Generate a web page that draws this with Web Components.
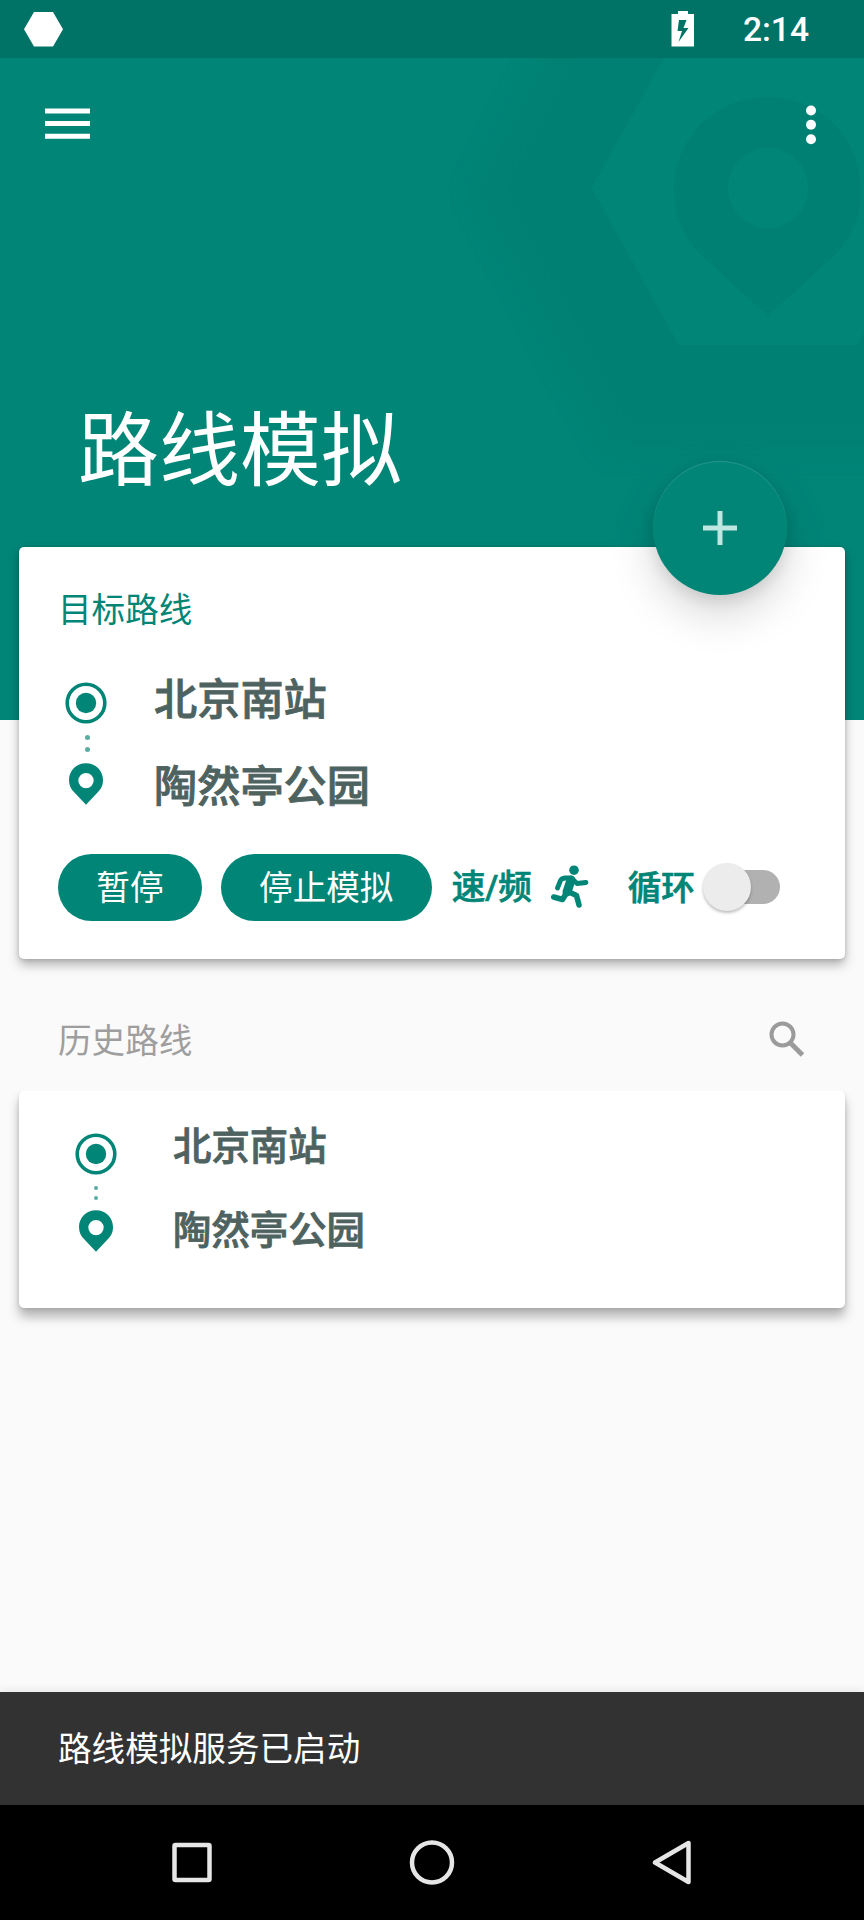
<!DOCTYPE html>
<html lang="zh-CN">
<head>
<meta charset="utf-8">
<title>路线模拟</title>
<style>
html,body{margin:0;padding:0}
body{width:864px;height:1920px;overflow:hidden;background:#fafafa;font-family:"Noto Sans CJK SC",Roboto,sans-serif}
</style>
</head>
<body>
<route-app></route-app>
<script>
const define = (name, html) => {
  const t = document.createElement('template');
  t.innerHTML = html;
  customElements.define(name, class extends HTMLElement {
    constructor() {
      super();
      this.attachShadow({ mode: 'open' }).append(t.content.cloneNode(true));
    }
  });
};

define('status-bar', `
<style>
:host{display:flex;align-items:center;height:58px;box-sizing:border-box;padding:0 55px 0 24px;background:#007266;color:#fff}
svg{display:block}
.space{flex:1}
.time{font:500 33.600px/58px Roboto,sans-serif;margin-left:48px;padding-top:1px}
</style>
<svg width="39" height="35" viewBox="0 0 39 35" style="margin-top:1px"><path d="M10 0H29L39 17.3 29 34.6H10L0 17.3Z" fill="#fff"/></svg>
<div class="space"></div>
<svg width="24" height="36" viewBox="0 0 24 36"><path fill="#fff" fill-rule="evenodd" d="M7 0H17V3H23V35.500H.5V3H7ZM8 9 6.500 20H11L7.500 31 17.500 17H12.500L15.500 9Z"/></svg>
<div class="time">2:14</div>
`);

define('top-bar', `
<style>
:host{display:flex;justify-content:space-between;align-items:center;height:134px;box-sizing:border-box;padding:0 47px 0 45px}
svg{display:block}
.menu{margin-top:-3px}
</style>
<svg class="menu" width="45" height="31" viewBox="0 0 45 31"><path fill="#fff" d="M0 .5H45V5.500H0ZM0 13H45V18H0ZM0 25.700H45V30.700H0Z"/></svg>
<svg width="12" height="40" viewBox="0 0 12 40"><g fill="#fff"><circle cx="6" cy="5.500" r="5"/><circle cx="6" cy="19.800" r="5"/><circle cx="6" cy="34.200" r="5"/></g></svg>
`);

define('hero-header', `
<style>
:host{display:block;position:relative;height:720px;background:#008577;color:#fff;overflow:hidden}
.mark{position:absolute;left:0;top:0}
.body{position:relative}
h1{margin:0;font-weight:400;font-size:81px;line-height:100px;padding:202px 0 0 78px}
</style>
<svg class="mark" width="864" height="720" viewBox="0 0 864 720">
<defs>
<filter id="soft" x="-20%" y="-20%" width="140%" height="140%"><feGaussianBlur stdDeviation="11"/></filter>
<mask id="hole"><rect width="864" height="720" fill="#fff"/><path d="M592 188 679 345H857L944 188 857 31H679Z" fill="#000"/></mask>
</defs>
<g mask="url(#hole)"><path d="M472 190 610 -72H926L1068 190 926 450H610Z" fill="#008072" filter="url(#soft)"/></g>
<path fill="#008072" fill-rule="evenodd" d="M768 97C717 97 674 137 674 190C674 223 688 243 704 258L768 316 832 258C848 243 861 223 861 190C861 137 819 97 768 97ZM768 148A40 40 0 1 1 768 228A40 40 0 1 1 768 148Z"/>
</svg>
<div class="body"><status-bar></status-bar><top-bar></top-bar><h1><slot></slot></h1></div>
`);

define('add-button', `
<style>
:host{display:flex;align-items:center;justify-content:center;width:134px;height:134px;border-radius:50%;background:#008577;box-shadow:0 18px 44px rgba(0,0,0,.17),0 6px 14px rgba(0,0,0,.09),inset 0 1px 1px rgba(255,255,255,.15)}
</style>
<svg width="34" height="34" viewBox="0 0 34 34"><path d="M0 17H34M17 0V34" stroke="#bfe7e2" stroke-width="5"/></svg>
`);

define('paper-card', `
<style>
:host{display:block;position:relative;box-sizing:border-box;background:#fff;border-radius:5px;box-shadow:0 6px 11px rgba(0,0,0,.28),0 1px 4px rgba(0,0,0,.14)}
</style>
<slot></slot>
`);

define('origin-icon', `
<style>:host{display:block}svg{display:block}</style>
<svg width="42" height="42" viewBox="0 0 42 42"><circle cx="21" cy="21" r="18.800" fill="none" stroke="#008577" stroke-width="3.600"/><circle cx="21" cy="21" r="10.200" fill="#008577"/></svg>
`);
define('pin-icon', `
<style>:host{display:block}svg{display:block}</style>
<svg width="34" height="42" viewBox="0 0 34 42"><path fill="#008577" fill-rule="evenodd" d="M17 .2C7.500 .2 0 7.500 0 17C0 22.500 2 26 5 29L17 41.700 29 29C32 26 34 22.500 34 17C34 7.500 26.500 .2 17 .2ZM17 9.900A7.700 7.700 0 1 1 17 25.300A7.700 7.700 0 1 1 17 9.900Z"/></svg>
`);

define('route-stops', `
<style>
:host{display:flex;color:#4e625f;font-weight:500;-webkit-text-stroke:.8px #4e625f}
.rail{display:flex;flex-direction:column;align-items:center;width:42px}
.dots{display:flex;flex-direction:column;align-items:center;gap:var(--dot-gap,7px);padding:var(--dot-pad,11px) 0;margin-left:var(--dot-shift,2px)}
.dots i{width:var(--dot,5px);height:var(--dot,5px);border-radius:50%;background:#5aada3}
.names{display:flex;flex-direction:column;margin-left:var(--name-left,47px);margin-top:var(--name-top);font-size:var(--name-size,43.2px);line-height:60px;gap:var(--name-gap,27px)}
</style>
<div class="rail"><origin-icon></origin-icon><div class="dots"><i></i><i></i></div><pin-icon></pin-icon></div>
<div class="names"><slot name="from"></slot><slot name="to"></slot></div>
`);

define('pill-button', `
<style>
:host{display:flex;align-items:center;justify-content:center;box-sizing:border-box;height:67px;padding:0 38.300px;border-radius:34px;background:#008577;color:#fff;font-size:33.600px;line-height:60px;white-space:nowrap}
span{margin-top:-2px}
</style>
<span><slot></slot></span>
`);

define('toggle-switch', `
<style>
:host{display:flex;align-items:center;width:77px;height:48px}
.track{width:60px;height:34px;margin-left:17px;border-radius:17px;background:#b1b1b1;display:flex;align-items:center}
.thumb{flex:none;width:48px;height:48px;margin-left:-17px;border-radius:50%;background:#ececec;box-shadow:0 2px 3px rgba(0,0,0,.26)}
</style>
<div class="track"><div class="thumb"></div></div>
`);

define('run-icon', `
<style>:host{display:block}svg{display:block}</style>
<svg width="38" height="44" viewBox="0 0 38 44"><g fill="none" stroke="#008577" stroke-linecap="round" stroke-linejoin="round"><circle cx="23" cy="5.200" r="4.800" fill="#008577" stroke="none"/><path d="M6.500 23 9.500 15.500Q10.500 13.500 14 13L20 12.800 26 18.500 35 17.500" stroke-width="4.800"/><path d="M20 15 16 27" stroke-width="9"/><path d="M16 27 11.500 34.500 2.700 32" stroke-width="5.500"/><path d="M17 26.500 25.500 30.500 28 40" stroke-width="5.500"/></g></svg>
`);

define('control-row', `
<style>
:host{display:flex;align-items:center;height:67px;color:#008577;font-weight:500;font-size:33.600px;line-height:60px;white-space:nowrap}
.t{margin-top:-3px;-webkit-text-stroke:.7px #008577}
.stop{margin-left:19px}
.speed{margin-left:20px;width:79px;margin-top:1px;font-family:Roboto,"Noto Sans CJK SC",sans-serif}
run-icon{margin-left:20px}
.loop{margin-left:39px;width:67px}
toggle-switch{margin-left:8px}
pill-button{font-weight:400}
</style>
<pill-button>暂停</pill-button>
<pill-button class="stop">停止模拟</pill-button>
<div class="t speed">速/频</div>
<run-icon></run-icon>
<div class="t loop">循环</div>
<toggle-switch></toggle-switch>
`);

define('history-heading', `
<style>
:host{display:flex;justify-content:space-between;align-items:center;height:132px;box-sizing:border-box;padding:0 59px 0 58px;color:#9e9e9e;font-size:33.600px;line-height:60px}
svg{display:block;margin-top:28px}
span{margin-top:27px}
</style>
<span><slot></slot></span>
<svg width="36" height="36" viewBox="0 0 36 36"><circle cx="13.500" cy="13.500" r="11" fill="none" stroke="#9b9b9b" stroke-width="4"/><path d="M22 22.500 33.500 34" stroke="#9b9b9b" stroke-width="5"/></svg>
`);

define('snack-bar', `
<style>
:host{display:flex;align-items:center;height:113px;padding-left:58px;background:#323232;color:#fff;font-size:33.600px;line-height:60px;box-shadow:0 -2px 8px rgba(0,0,0,.08)}
span{margin-top:-3px}
</style>
<span><slot></slot></span>
`);

define('nav-bar', `
<style>
:host{display:flex;align-items:center;justify-content:space-between;height:115px;box-sizing:border-box;padding:0 171px;background:#000}
svg{display:block}
</style>
<svg width="42" height="46" viewBox="0 0 42 46"><rect x="3.500" y="5" width="35" height="35" rx="1" fill="none" stroke="#e6e6e6" stroke-width="4.500"/></svg>
<svg width="46" height="46" viewBox="0 0 46 46"><circle cx="23" cy="22.500" r="20" fill="none" stroke="#e6e6e6" stroke-width="4.500"/></svg>
<svg width="42" height="46" viewBox="0 0 42 46"><path d="M37.500 3V42L4 22.500Z" fill="none" stroke="#e6e6e6" stroke-width="4.500" stroke-linejoin="round"/></svg>
`);

define('route-app', `
<style>
:host{display:flex;flex-direction:column;width:864px;height:1920px;background:#fafafa}
.target{margin:-173px 19px 0;height:412px;padding:33px 39px}
.target h2{margin:0;font-weight:400;font-size:33.600px;line-height:56px;color:#008577}
.target add-button{position:absolute;right:58px;top:-86px}
.target route-stops{margin:46px 0 0 7px;--name-top:-16px;height:171.500px}
.history{margin:0 19px;height:217px;padding:42px 56px;clip-path:inset(0 -20px -30px -20px);box-shadow:0 9px 11px rgba(0,0,0,.28),0 1px 4px rgba(0,0,0,.12)}
.history route-stops{--name-size:38.400px;--name-left:56px;--name-top:-20px;--name-gap:24px;--dot:4px;--dot-gap:6px;--dot-pad:10.500px;--dot-shift:-1px}
snack-bar{margin-top:auto}
</style>
<hero-header>路线模拟</hero-header>
<paper-card class="target">
<h2>目标路线</h2>
<add-button></add-button>
<route-stops><span slot="from">北京南站</span><span slot="to">陶然亭公园</span></route-stops>
<control-row></control-row>
</paper-card>
<history-heading>历史路线</history-heading>
<paper-card class="history">
<route-stops><span slot="from">北京南站</span><span slot="to">陶然亭公园</span></route-stops>
</paper-card>
<snack-bar>路线模拟服务已启动</snack-bar>
<nav-bar></nav-bar>
`);
</script>
</body>
</html>
